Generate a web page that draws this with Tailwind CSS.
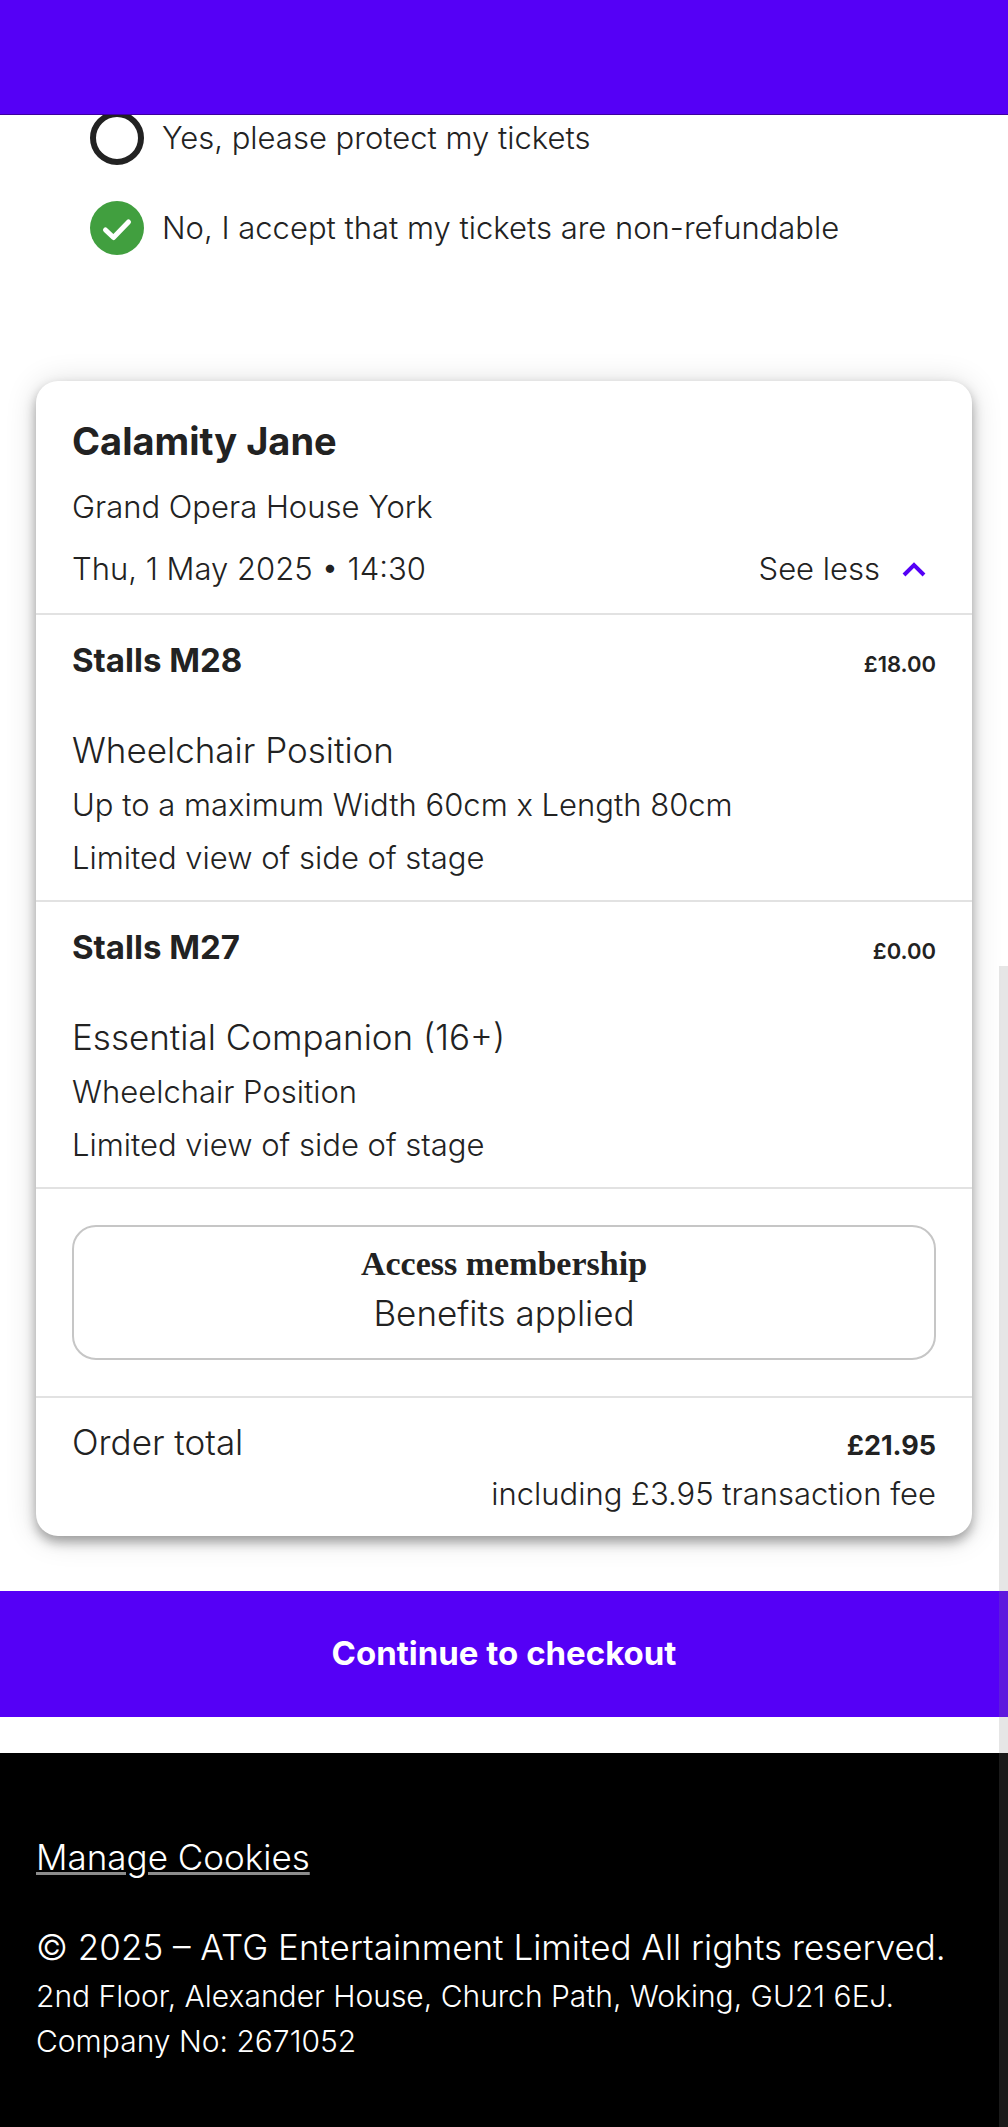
<!DOCTYPE html>
<html lang="en">
<head>
<meta charset="utf-8">
<meta name="viewport" content="width=device-width, initial-scale=1">
<title>Your basket</title>
<script src="https://cdn.jsdelivr.net/npm/@tailwindcss/browser@4"></script>
</head>
<body class="relative flex min-h-screen flex-col bg-white font-['Inter',sans-serif] text-[31px] font-light text-[#222]">
  <header class="relative z-10 h-[115px] border-b border-[#3d009e] bg-[#5500f6]"></header>

  <main>
    <form class="-mt-[5px] flex flex-col gap-[34px] px-[90px]">
      <div class="flex items-center gap-[18px]">
        <input id="protect-yes" type="radio" name="protect" class="size-[54px] shrink-0 appearance-none rounded-full border-[6px] border-[#222] bg-white">
        <label for="protect-yes" class="leading-[56px]">Yes, please protect my tickets</label>
      </div>
      <div class="flex items-center gap-[18px]">
        <span class="grid shrink-0">
          <input id="protect-no" type="radio" name="protect" checked class="col-start-1 row-start-1 size-[54px] appearance-none rounded-full bg-[#419f3f]">
          <svg class="pointer-events-none col-start-1 row-start-1 size-[54px]" viewBox="0 0 54 54" fill="none" stroke="#fff" stroke-width="5" stroke-linecap="round" stroke-linejoin="round" aria-hidden="true"><path d="M15.500 29 L23.500 36.500 L38.500 21"/></svg>
        </span>
        <label for="protect-no" class="leading-[56px]">No, I accept that my tickets are non-refundable</label>
      </div>
    </form>

    <section class="mx-9 mt-[125px] divide-y-2 divide-[#e2e2e2] rounded-[22px] bg-white shadow-[0_6px_12px_rgb(0_0_0/0.34),0_2px_32px_rgb(0_0_0/0.14)]">
      <div class="px-9 pt-9 pb-5">
        <h2 class="mb-[18px] text-[38px] leading-[48px] font-bold">Calamity Jane</h2>
        <p class="mb-[14px] leading-[48px]">Grand Opera House York</p>
        <div class="flex items-center justify-between">
          <p class="leading-[48px]">Thu, 1 May 2025 • 14:30</p>
          <button type="button" class="flex items-center gap-4 pr-1 leading-[48px]">See less
            <svg class="size-9" viewBox="0 0 36 36" fill="none" stroke="#5500f6" stroke-width="4" aria-hidden="true"><path d="M8 24 L18 14 L28 24"/></svg>
          </button>
        </div>
      </div>

      <div class="px-9 pt-[21px] pb-4">
        <div class="mb-[34px] flex items-baseline justify-between leading-[48px]">
          <h3 class="text-[33px] font-bold">Stalls M28</h3>
          <span class="text-[22px] font-semibold">£18.00</span>
        </div>
        <p class="text-[35px] leading-[56px]">Wheelchair Position</p>
        <p class="leading-[53px]">Up to a maximum Width 60cm x Length 80cm</p>
        <p class="leading-[53px]">Limited view of side of stage</p>
      </div>

      <div class="px-9 pt-[21px] pb-4">
        <div class="mb-[34px] flex items-baseline justify-between leading-[48px]">
          <h3 class="text-[33px] font-bold">Stalls M27</h3>
          <span class="text-[22px] font-semibold">£0.00</span>
        </div>
        <p class="text-[35px] leading-[56px]">Essential Companion (16+)</p>
        <p class="leading-[53px]">Wheelchair Position</p>
        <p class="leading-[53px]">Limited view of side of stage</p>
      </div>

      <div class="p-9">
        <div class="rounded-[24px] border-2 border-[#c6c6c6] pt-[15px] pb-[21px] text-center">
          <h3 class="mb-[3px] font-['Liberation_Serif',serif] text-[34px] leading-[44px] font-bold">Access membership</h3>
          <p class="text-[35px] leading-[48px]">Benefits applied</p>
        </div>
      </div>

      <div class="px-9 pt-5 pb-[18px] leading-[48px]">
        <div class="flex items-baseline justify-between">
          <span class="text-[35px]">Order total</span>
          <span class="text-[27px] font-bold">£21.95</span>
        </div>
        <p class="text-right">including £3.95 transaction fee</p>
      </div>
    </section>

    <button type="button" class="mt-[55px] mb-9 h-[126px] w-full bg-[#5500f6] text-[33px] font-bold text-white">Continue to checkout</button>
  </main>

  <footer class="grow bg-black px-9 pt-20 pb-14 text-white">
    <a href="#" class="mb-[42px] block w-fit text-[35px] leading-[48px] underline decoration-[#8c8c8c] decoration-3">Manage Cookies</a>
    <p class="mb-[3px] text-[35px] leading-[48px]">© 2025 – ATG Entertainment Limited All rights reserved.</p>
    <p class="text-[30px] leading-[45px]">2nd Floor, Alexander House, Church Path, Woking, GU21 6EJ.</p>
    <p class="text-[30px] leading-[45px]">Company No: 2671052</p>
  </footer>

  <div class="pointer-events-none absolute top-[966px] right-0 bottom-0 w-[9px] bg-[#808080]/20"></div>
</body>
</html>
